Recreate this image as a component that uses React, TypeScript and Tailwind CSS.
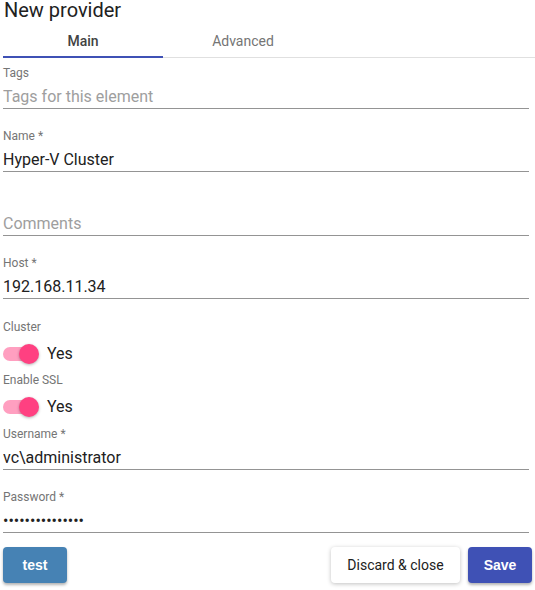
import { useState } from "react";

const font = { fontFamily: "Roboto, 'Noto Sans', sans-serif" };

function TextField({ label, value, placeholder, type = "text", className = "" }: { label?: string; value?: string; placeholder?: string; type?: string; className?: string }) {
  return (
    <div className={`w-[526px] ${className}`}>
      <div className="h-[14px] text-[12px] leading-[14px] text-[#757575]">{label ?? ""}</div>
      <div className="mt-[7px] border-b border-[#949494] pb-[1px]">
        <input
          readOnly
          type={type}
          defaultValue={value}
          placeholder={placeholder}
          className="block h-5 w-full bg-transparent p-0 text-[16px] leading-5 text-[#212121] outline-none placeholder:text-[#9e9e9e]"
          style={font}
        />
      </div>
    </div>
  );
}

function SwitchField({ label, className = "" }: { label: string; className?: string }) {
  const [on, setOn] = useState(true);
  return (
    <div className={className}>
      <div className="h-[14px] text-[12px] leading-[14px] text-[#757575]">{label}</div>
      <button onClick={() => setOn(!on)} className="mt-2 flex h-6 items-center gap-[8px]">
        <span className="relative block h-[14px] w-[34px]">
          <span className={`block h-[14px] w-[34px] rounded-full ${on ? "bg-[#ff9fc0]" : "bg-[#bdbdbd]"}`} />
          <span
            className={`absolute top-[-3px] h-5 w-5 rounded-full shadow-[0_1px_3px_rgba(0,0,0,0.3)] ${on ? "left-[16px] bg-[#ff4081]" : "left-[-3px] bg-[#fafafa]"}`}
          />
        </span>
        <span className="ml-[2px] text-[16px] leading-6 text-[#212121]">{on ? "Yes" : "No"}</span>
      </button>
    </div>
  );
}

export default function App() {
  const [tab, setTab] = useState<"Main" | "Advanced">("Main");
  return (
    <div className="min-h-[590px] w-[535px] bg-white pl-[3px] pr-[3px]" style={font}>
      <h1 className="pl-[1px] text-[20px] font-normal leading-5 text-[#212121]">New provider</h1>

      <div className="-mr-[3px] mt-[8px] flex border-b border-[#e0e0e0]">
        {(["Main", "Advanced"] as const).map((item) => (
          <button
            key={item}
            onClick={() => setTab(item)}
            className={`relative w-[160px] pb-[6px] pt-[3px] text-center text-[14px] leading-5 ${tab === item ? "font-medium text-[#424242]" : "text-[#757575]"}`}
          >
            {item}
            {tab === item ? <span className="absolute bottom-[-1px] left-0 h-[2px] w-full bg-[#3f51b5]" /> : null}
          </button>
        ))}
      </div>

      <div className="mt-[8px] flex flex-col">
        <TextField label="Tags" placeholder="Tags for this element" />
        <TextField className="mt-5" label="Name *" value="Hyper-V Cluster" />
        <TextField className="mt-[21px]" placeholder="Comments" />
        <TextField className="mt-5" label="Host *" value="192.168.11.34" />
        <SwitchField className="mt-[21px]" label="Cluster" />
        <SwitchField className="mt-[7px]" label="Enable SSL" />
        <TextField className="mt-[8px]" label="Username *" value="vc\administrator" />
        <TextField className="mt-5" label="Password *" type="password" value="administrator12" />
      </div>

      <div className="mt-[14px] flex items-center">
        <button
          className="h-9 w-16 rounded bg-[#4682b4] text-[14px] font-bold text-white shadow-[0_2px_3px_rgba(0,0,0,0.3)]"
          style={{ fontFamily: "'Liberation Sans', Arial, sans-serif" }}
        >
          test
        </button>
        <div className="ml-auto flex gap-2">
          <button className="h-9 w-[129px] rounded bg-white text-[14px] text-[#212121] shadow-[0_1px_4px_rgba(0,0,0,0.25)]">Discard &amp; close</button>
          <button
            className="h-9 w-16 rounded bg-[#3f51b5] text-[14px] font-bold text-white shadow-[0_2px_3px_rgba(0,0,0,0.3)]"
            style={{ fontFamily: "'Liberation Sans', Arial, sans-serif" }}
          >
            Save
          </button>
        </div>
      </div>
    </div>
  );
}
